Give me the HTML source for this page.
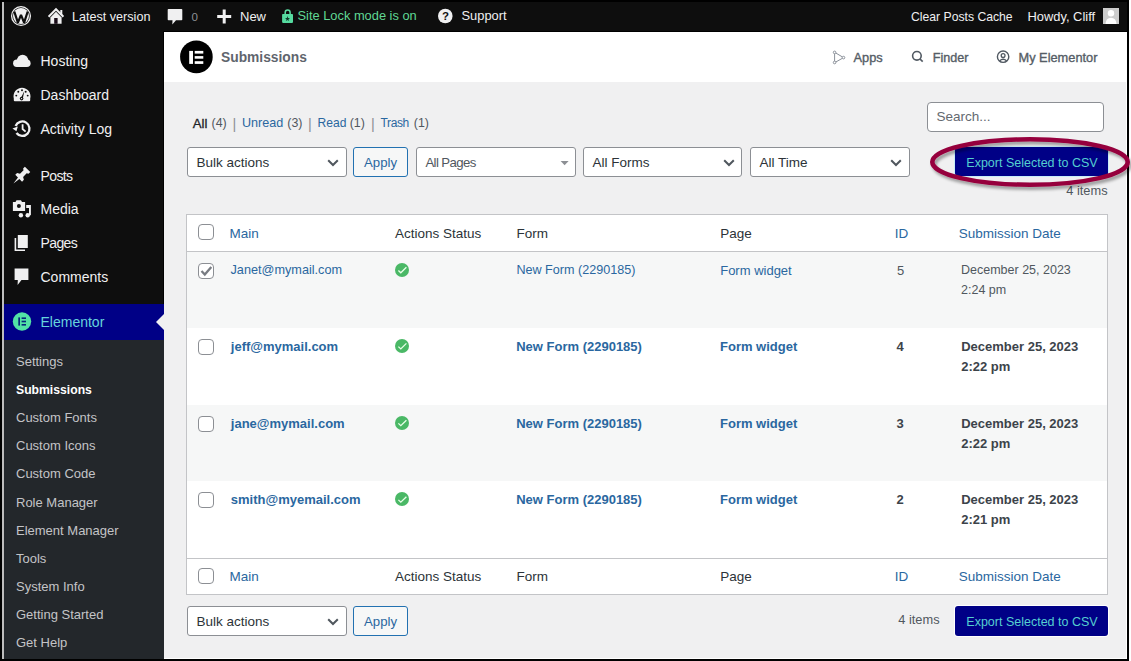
<!DOCTYPE html>
<html><head><meta charset="utf-8">
<style>
*{margin:0;padding:0;box-sizing:border-box}
html,body{width:1131px;height:661px;overflow:hidden;background:#000}
body{position:relative;font-family:"Liberation Sans",sans-serif;font-size:13px;color:#2c3338}
.a{position:absolute;white-space:nowrap}
.r{position:absolute}
svg{position:absolute;overflow:visible}
</style></head><body>
<div class="r" style="left:0px;top:0px;width:1129px;height:661px;background:#000;"></div>
<div class="r" style="left:1129px;top:0px;width:2px;height:661px;background:#fff;"></div>
<div class="r" style="left:2px;top:2px;width:2px;height:657px;background:#bdbdbd;"></div>
<div class="r" style="left:4px;top:2px;width:1123px;height:29px;background:#0e0e0e;"></div>
<div class="r" style="left:4px;top:31px;width:159px;height:628px;background:#0e0e0e;"></div>
<div class="r" style="left:163px;top:31px;width:964px;height:628px;background:#000;"></div>
<div class="r" style="left:164px;top:32px;width:963px;height:627px;background:#fff;"></div>
<div class="r" style="left:164px;top:32px;width:962px;height:626px;background:#f0f0f1;"></div>
<div class="r" style="left:4px;top:304px;width:160px;height:36px;background:#000086;"></div>
<div class="r" style="left:4px;top:340px;width:160px;height:319px;background:#23272b;"></div>
<div class="r" style="left:164px;top:32px;width:962px;height:50px;background:#fff;"></div>
<div class="a" style="left:72px;top:10.63px;font-size:12.6px;line-height:12.6px;color:#f0f0f1;">Latest version</div>
<div class="a" style="left:191.6px;top:10.58px;font-size:11.6px;line-height:11.6px;color:#8c8f94;">0</div>
<div class="a" style="left:240px;top:10.30px;font-size:13px;line-height:13px;color:#f0f0f1;">New</div>
<div class="a" style="left:297.5px;top:10.42px;font-size:12.85px;line-height:12.85px;color:#60d894;">Site Lock mode is on</div>
<div class="a" style="left:461.5px;top:10.38px;font-size:12.9px;line-height:12.9px;color:#f0f0f1;">Support</div>
<div class="a" style="left:911px;top:10.97px;font-size:12.2px;line-height:12.2px;color:#f0f0f1;">Clear Posts Cache</div>
<div class="a" style="left:1027.5px;top:10.98px;font-size:12.9px;line-height:12.9px;color:#f0f0f1;">Howdy, Cliff</div>
<div class="r" style="left:1103px;top:8px;width:16px;height:16px;background:#cdcdcd;"></div>
<div class="a" style="left:40.5px;top:54.35px;font-size:14px;line-height:14px;color:#f0f0f1;">Hosting</div>
<div class="a" style="left:40.5px;top:88.25px;font-size:14px;line-height:14px;color:#f0f0f1;">Dashboard</div>
<div class="a" style="left:40.5px;top:121.95px;font-size:14px;line-height:14px;color:#f0f0f1;">Activity Log</div>
<div class="a" style="left:40.5px;top:168.55px;font-size:14px;line-height:14px;color:#f0f0f1;letter-spacing:-0.6px;">Posts</div>
<div class="a" style="left:40.5px;top:202.15px;font-size:14px;line-height:14px;color:#f0f0f1;">Media</div>
<div class="a" style="left:40.5px;top:235.85px;font-size:14px;line-height:14px;color:#f0f0f1;letter-spacing:-0.6px;">Pages</div>
<div class="a" style="left:40.5px;top:269.95px;font-size:14px;line-height:14px;color:#f0f0f1;">Comments</div>
<div class="a" style="left:40.5px;top:315.15px;font-size:14px;line-height:14px;color:#66d4dc;">Elementor</div>
<div class="a" style="left:16px;top:355.10px;font-size:13px;line-height:13px;color:#c3c4c7;">Settings</div>
<div class="a" style="left:16px;top:383.85px;font-size:12.2px;line-height:12.2px;color:#ffffff;font-weight:bold;">Submissions</div>
<div class="a" style="left:16px;top:411.26px;font-size:13px;line-height:13px;color:#c3c4c7;">Custom Fonts</div>
<div class="a" style="left:16px;top:439.34px;font-size:13px;line-height:13px;color:#c3c4c7;">Custom Icons</div>
<div class="a" style="left:16px;top:467.42px;font-size:13px;line-height:13px;color:#c3c4c7;">Custom Code</div>
<div class="a" style="left:16px;top:495.50px;font-size:13px;line-height:13px;color:#c3c4c7;">Role Manager</div>
<div class="a" style="left:16px;top:523.58px;font-size:13px;line-height:13px;color:#c3c4c7;">Element Manager</div>
<div class="a" style="left:16px;top:551.66px;font-size:13px;line-height:13px;color:#c3c4c7;">Tools</div>
<div class="a" style="left:16px;top:579.74px;font-size:13px;line-height:13px;color:#c3c4c7;">System Info</div>
<div class="a" style="left:16px;top:607.82px;font-size:13px;line-height:13px;color:#c3c4c7;">Getting Started</div>
<div class="a" style="left:16px;top:635.90px;font-size:13px;line-height:13px;color:#c3c4c7;">Get Help</div>
<div class="a" style="left:221px;top:50.72px;font-size:13.8px;line-height:13.8px;color:#5f656d;font-weight:bold;">Submissions</div>
<div class="a" style="left:853.5px;top:51.66px;font-size:12.8px;line-height:12.8px;color:#555d66;-webkit-text-stroke:0.35px #555d66;">Apps</div>
<div class="a" style="left:932.7px;top:51.83px;font-size:12.6px;line-height:12.6px;color:#555d66;-webkit-text-stroke:0.35px #555d66;">Finder</div>
<div class="a" style="left:1018.5px;top:51.66px;font-size:12.8px;line-height:12.8px;color:#555d66;-webkit-text-stroke:0.35px #555d66;">My Elementor</div>
<div class="a" style="left:192.7px;top:116.53px;font-size:13.2px;line-height:13.2px;color:#1d2327;-webkit-text-stroke:0.3px #1d2327;">All</div>
<div class="a" style="left:211.5px;top:117.20px;font-size:12.4px;line-height:12.4px;color:#50575e;">(4)</div>
<div class="a" style="left:232.5px;top:116.63px;font-size:14.5px;line-height:14.5px;color:#8c8f94;">|</div>
<div class="a" style="left:242px;top:117.03px;font-size:12.6px;line-height:12.6px;color:#2a67a0;">Unread</div>
<div class="a" style="left:287.3px;top:117.20px;font-size:12.4px;line-height:12.4px;color:#50575e;">(3)</div>
<div class="a" style="left:308px;top:116.63px;font-size:14.5px;line-height:14.5px;color:#8c8f94;">|</div>
<div class="a" style="left:317.6px;top:117.46px;font-size:12.1px;line-height:12.1px;color:#2a67a0;">Read</div>
<div class="a" style="left:349.7px;top:117.20px;font-size:12.4px;line-height:12.4px;color:#50575e;">(1)</div>
<div class="a" style="left:371px;top:116.63px;font-size:14.5px;line-height:14.5px;color:#8c8f94;">|</div>
<div class="a" style="left:380.6px;top:117.14px;font-size:12.0px;line-height:12.0px;color:#2a67a0;letter-spacing:-0.4px;">Trash</div>
<div class="a" style="left:413.8px;top:117.20px;font-size:12.4px;line-height:12.4px;color:#50575e;">(1)</div>
<div class="r" style="left:187px;top:147px;width:160px;height:30px;background:#fff;border:1px solid #8c8f94;border-radius:3px;"></div>
<div class="a" style="left:196.5px;top:155.57px;font-size:13.5px;line-height:13.5px;color:#2c3338;">Bulk actions</div>
<div class="r" style="left:353px;top:147px;width:55px;height:30px;background:#f6f7f7;border:1px solid #2271b1;border-radius:3px;"></div>
<div class="a" style="left:364px;top:155.83px;font-size:13.2px;line-height:13.2px;color:#2a67a0;">Apply</div>
<div class="r" style="left:416px;top:147px;width:160px;height:30px;background:#fff;border:1px solid #8c8f94;border-radius:3px;"></div>
<div class="a" style="left:425.4px;top:155.83px;font-size:13.2px;line-height:13.2px;color:#50575e;letter-spacing:-0.6px;">All Pages</div>
<div class="r" style="left:583px;top:147px;width:159px;height:30px;background:#fff;border:1px solid #8c8f94;border-radius:3px;"></div>
<div class="a" style="left:592.5px;top:155.57px;font-size:13.5px;line-height:13.5px;color:#2c3338;">All Forms</div>
<div class="r" style="left:750px;top:147px;width:160px;height:30px;background:#fff;border:1px solid #8c8f94;border-radius:3px;"></div>
<div class="a" style="left:759.5px;top:155.57px;font-size:13.5px;line-height:13.5px;color:#2c3338;">All Time</div>
<div class="r" style="left:927px;top:102px;width:177px;height:30px;background:#fff;border:1px solid #8c8f94;border-radius:4px;"></div>
<div class="a" style="left:936.4px;top:110.27px;font-size:13.5px;line-height:13.5px;color:#646970;">Search...</div>
<div class="r" style="left:955px;top:147px;width:153px;height:29px;background:#000086;border-radius:3px;box-shadow:0 0 0 1px #c8eef8;"></div>
<div class="a" style="left:966.3px;top:156.62px;font-size:12.5px;line-height:12.5px;color:#55cfd0;">Export Selected to CSV</div>
<div class="a" style="left:1066.3px;top:184.66px;font-size:12.8px;line-height:12.8px;color:#50575e;">4 items</div>
<div class="r" style="left:187px;top:606px;width:160px;height:30px;background:#fff;border:1px solid #8c8f94;border-radius:3px;"></div>
<div class="a" style="left:196.5px;top:614.57px;font-size:13.5px;line-height:13.5px;color:#2c3338;">Bulk actions</div>
<div class="r" style="left:353px;top:606px;width:55px;height:30px;background:#f6f7f7;border:1px solid #2271b1;border-radius:3px;"></div>
<div class="a" style="left:364px;top:614.83px;font-size:13.2px;line-height:13.2px;color:#2a67a0;">Apply</div>
<div class="r" style="left:955px;top:606px;width:153px;height:30px;background:#000086;border-radius:3px;box-shadow:0 0 0 1px #ffffff;"></div>
<div class="a" style="left:966.3px;top:615.62px;font-size:12.5px;line-height:12.5px;color:#55cfd0;">Export Selected to CSV</div>
<div class="a" style="left:898.3px;top:613.96px;font-size:12.8px;line-height:12.8px;color:#50575e;">4 items</div>
<div class="r" style="left:186px;top:214px;width:922px;height:381px;background:#c3c4c7;"></div>
<div class="r" style="left:187px;top:215px;width:920px;height:36px;background:#fff;"></div>
<div class="r" style="left:187px;top:252px;width:920px;height:76px;background:#f6f7f7;"></div>
<div class="r" style="left:187px;top:328px;width:920px;height:77px;background:#fff;"></div>
<div class="r" style="left:187px;top:405px;width:920px;height:76px;background:#f6f7f7;"></div>
<div class="r" style="left:187px;top:481px;width:920px;height:77px;background:#fff;"></div>
<div class="r" style="left:187px;top:559px;width:920px;height:35px;background:#fff;"></div>
<div class="a" style="left:229.6px;top:226.57px;font-size:13.5px;line-height:13.5px;color:#2a67a0;">Main</div>
<div class="a" style="left:395px;top:226.57px;font-size:13.5px;line-height:13.5px;color:#2c3338;">Actions Status</div>
<div class="a" style="left:516.4px;top:226.57px;font-size:13.5px;line-height:13.5px;color:#2c3338;">Form</div>
<div class="a" style="left:720.2px;top:226.57px;font-size:13.5px;line-height:13.5px;color:#2c3338;">Page</div>
<div class="a" style="left:894.8px;top:226.57px;font-size:13.5px;line-height:13.5px;color:#2a67a0;">ID</div>
<div class="a" style="left:958.8px;top:226.57px;font-size:13.5px;line-height:13.5px;color:#2a67a0;">Submission Date</div>
<div class="a" style="left:229.6px;top:570.07px;font-size:13.5px;line-height:13.5px;color:#2a67a0;">Main</div>
<div class="a" style="left:395px;top:570.07px;font-size:13.5px;line-height:13.5px;color:#2c3338;">Actions Status</div>
<div class="a" style="left:516.4px;top:570.07px;font-size:13.5px;line-height:13.5px;color:#2c3338;">Form</div>
<div class="a" style="left:720.2px;top:570.07px;font-size:13.5px;line-height:13.5px;color:#2c3338;">Page</div>
<div class="a" style="left:894.8px;top:570.07px;font-size:13.5px;line-height:13.5px;color:#2a67a0;">ID</div>
<div class="a" style="left:958.8px;top:570.07px;font-size:13.5px;line-height:13.5px;color:#2a67a0;">Submission Date</div>
<div class="r" style="left:198px;top:224px;width:16px;height:16px;background:#fff;border:1px solid #8c8f94;border-radius:4px;"></div>
<div class="r" style="left:198px;top:568px;width:16px;height:16px;background:#fff;border:1px solid #8c8f94;border-radius:4px;"></div>
<div class="r" style="left:198px;top:263px;width:16px;height:16px;background:#fff;border:1px solid #8c8f94;border-radius:4px;"></div>
<div class="a" style="left:230.5px;top:264.25px;font-size:12.7px;line-height:12.7px;color:#2a67a0;">Janet@mymail.com</div>
<div class="a" style="left:516.4px;top:264.33px;font-size:12.6px;line-height:12.6px;color:#2a67a0;">New Form (2290185)</div>
<div class="a" style="left:720.2px;top:264.00px;font-size:13px;line-height:13px;color:#2a67a0;">Form widget</div>
<div class="a" style="left:897px;top:264.00px;font-size:13px;line-height:13px;color:#50575e;">5</div>
<div class="a" style="left:961px;top:264.42px;font-size:12.5px;line-height:12.5px;color:#50575e;">December 25, 2023</div>
<div class="a" style="left:961px;top:283.92px;font-size:12.5px;line-height:12.5px;color:#50575e;">2:24 pm</div>
<div class="r" style="left:395px;top:263px;width:14px;height:14px;background:#4ab866;border-radius:50%;"></div>
<div class="r" style="left:198px;top:339px;width:16px;height:16px;background:#fff;border:1px solid #8c8f94;border-radius:4px;"></div>
<div class="a" style="left:230.8px;top:340.00px;font-size:13px;line-height:13px;color:#2a67a0;font-weight:bold;">jeff@mymail.com</div>
<div class="a" style="left:516.2px;top:340.00px;font-size:13px;line-height:13px;color:#2a67a0;font-weight:bold;">New Form (2290185)</div>
<div class="a" style="left:720px;top:340.00px;font-size:13px;line-height:13px;color:#2a67a0;font-weight:bold;">Form widget</div>
<div class="a" style="left:896.4px;top:340.00px;font-size:13px;line-height:13px;color:#3c434a;font-weight:bold;">4</div>
<div class="a" style="left:961.2px;top:340.00px;font-size:13px;line-height:13px;color:#3c434a;font-weight:bold;">December 25, 2023</div>
<div class="a" style="left:961.2px;top:359.50px;font-size:13px;line-height:13px;color:#3c434a;font-weight:bold;">2:22 pm</div>
<div class="r" style="left:395px;top:339px;width:14px;height:14px;background:#4ab866;border-radius:50%;"></div>
<div class="r" style="left:198px;top:416px;width:16px;height:16px;background:#fff;border:1px solid #8c8f94;border-radius:4px;"></div>
<div class="a" style="left:230.8px;top:417.00px;font-size:13px;line-height:13px;color:#2a67a0;font-weight:bold;">jane@mymail.com</div>
<div class="a" style="left:516.2px;top:417.00px;font-size:13px;line-height:13px;color:#2a67a0;font-weight:bold;">New Form (2290185)</div>
<div class="a" style="left:720px;top:417.00px;font-size:13px;line-height:13px;color:#2a67a0;font-weight:bold;">Form widget</div>
<div class="a" style="left:896.4px;top:417.00px;font-size:13px;line-height:13px;color:#3c434a;font-weight:bold;">3</div>
<div class="a" style="left:961.2px;top:417.00px;font-size:13px;line-height:13px;color:#3c434a;font-weight:bold;">December 25, 2023</div>
<div class="a" style="left:961.2px;top:436.50px;font-size:13px;line-height:13px;color:#3c434a;font-weight:bold;">2:22 pm</div>
<div class="r" style="left:395px;top:416px;width:14px;height:14px;background:#4ab866;border-radius:50%;"></div>
<div class="r" style="left:198px;top:492px;width:16px;height:16px;background:#fff;border:1px solid #8c8f94;border-radius:4px;"></div>
<div class="a" style="left:230.8px;top:493.00px;font-size:13px;line-height:13px;color:#2a67a0;font-weight:bold;">smith@myemail.com</div>
<div class="a" style="left:516.2px;top:493.00px;font-size:13px;line-height:13px;color:#2a67a0;font-weight:bold;">New Form (2290185)</div>
<div class="a" style="left:720px;top:493.00px;font-size:13px;line-height:13px;color:#2a67a0;font-weight:bold;">Form widget</div>
<div class="a" style="left:896.4px;top:493.00px;font-size:13px;line-height:13px;color:#3c434a;font-weight:bold;">2</div>
<div class="a" style="left:961.2px;top:493.00px;font-size:13px;line-height:13px;color:#3c434a;font-weight:bold;">December 25, 2023</div>
<div class="a" style="left:961.2px;top:512.50px;font-size:13px;line-height:13px;color:#3c434a;font-weight:bold;">2:21 pm</div>
<div class="r" style="left:395px;top:492px;width:14px;height:14px;background:#4ab866;border-radius:50%;"></div>
<svg width="1131" height="661" style="left:0;top:0" viewBox="0 0 1131 661"><circle cx="21" cy="16" r="9.4" fill="none" stroke="#f0f0f1" stroke-width="1.3"/><circle cx="21" cy="16" r="8" fill="#f0f0f1"/><path d="M14.3,11.6 L17.9,22.6 L21,14.8 L24.1,22.6 L27.7,11.6" fill="none" stroke="#0e0e0e" stroke-width="2.2" stroke-linejoin="bevel"/><path d="M48.6,16.8 L56,9.2 L63.4,16.8" fill="none" stroke="#f0f0f1" stroke-width="2"/><rect x="60.3" y="10" width="2" height="5" fill="#f0f0f1"/><path d="M50.4,17.4 L56,11.8 L61.6,17.4 V23.8 H50.4 Z" fill="#f0f0f1"/><rect x="54.2" y="18" width="3.4" height="5.8" fill="#1a0c18"/><path d="M168.5,9 H181.5 Q182.3,9 182.3,9.8 V19.5 Q182.3,20.3 181.5,20.3 H176 L172.3,24.4 L172.5,20.3 H168.5 Q167.7,20.3 167.7,19.5 V9.8 Q167.7,9 168.5,9 Z" fill="#f0f0f1"/><rect x="222.7" y="9.5" width="3" height="14" fill="#f0f0f1"/><rect x="217.2" y="15" width="14" height="3" fill="#f0f0f1"/><path d="M285.2,14 V12.5 A2.45,2.45 0 0 1 290.1,12.5 V14" fill="none" stroke="#5ddca2" stroke-width="1.5"/><rect x="282.1" y="14" width="10.9" height="8.9" rx="0.8" fill="#56dba0"/><path d="M287.5,16 L288.1,18 L290,18 L288.5,19.2 L289.1,21 L287.5,19.9 L285.9,21 L286.5,19.2 L285,18 L286.9,18 Z" fill="#0f3a2a"/><circle cx="445.3" cy="16" r="7.3" fill="#f0f0f1"/><text x="445.6" y="20.3" font-family="Liberation Sans" font-weight="bold" font-size="11.5" fill="#101010" text-anchor="middle">?</text><circle cx="1111" cy="13.2" r="3.2" fill="#fff"/><path d="M1105.5,24 Q1106,17.8 1111,17.8 Q1116,17.8 1116.5,24 Z" fill="#fff"/><g fill="#f0f0f1"><circle cx="16.8" cy="63.3" r="3.7"/><circle cx="22.6" cy="60.6" r="5.8"/><circle cx="26.8" cy="63.2" r="3.8"/><rect x="16.8" y="62" width="10" height="5"/></g><path d="M13.8,98.5 A8.5,8.5 0 1 1 30.2,98.5 V100.2 Q30.2,101.2 29.2,101.2 H14.8 Q13.8,101.2 13.8,100.2 Z" fill="#f0f0f1"/><g fill="#0e0e0e"><circle cx="16.3" cy="95.6" r="0.95"/><circle cx="18.3" cy="91.8" r="0.95"/><circle cx="22" cy="90.3" r="0.95"/><circle cx="25.7" cy="91.8" r="0.95"/><circle cx="27.7" cy="95.6" r="0.95"/></g><path d="M20.6,98.4 L24.4,91 L22.6,99.2 Z" fill="#0e0e0e"/><circle cx="21.6" cy="98.6" r="1.8" fill="#0e0e0e"/><circle cx="21.6" cy="98.6" r="0.7" fill="#f0f0f1"/><path d="M15.6,126 A7.2,7.2 0 1 1 16.5,133" fill="none" stroke="#f0f0f1" stroke-width="2.3"/><path d="M12.8,127.5 L18.5,127.5 L15.6,131.5 Z" fill="#f0f0f1" transform="rotate(-20 15.6 129)"/><path d="M22.6,124.2 V129 L25.6,131.6" fill="none" stroke="#f0f0f1" stroke-width="1.8"/><path d="M-3.8,-10 L3.8,-10 L3.8,-7.5 L2.2,-6.5 L2.2,-1.5 L4.8,0 L4.8,2.6 L1,2.6 L0,10 L-1,2.6 L-4.8,2.6 L-4.8,0 L-2.2,-1.5 L-2.2,-6.5 L-3.8,-7.5 Z" fill="#f0f0f1" transform="translate(20.5 176.4) rotate(45)"/><path d="M12.9,202 H15.5 L16.5,200.2 H21 L22,202 H25.1 V210.9 H12.9 Z" fill="#f0f0f1"/><circle cx="18.9" cy="206" r="2" fill="#101010"/><path d="M26.2,204.9 H30.9 V215.3 H29 V208 H26.2 Z" fill="#f0f0f1"/><circle cx="20.9" cy="215.3" r="2.2" fill="#f0f0f1"/><circle cx="27.7" cy="215.3" r="2.2" fill="#f0f0f1"/><rect x="17.8" y="235" width="10" height="13" fill="#f0f0f1"/><path d="M14.6,238 H16.2 V249.4 H25 V251 H14.6 Z" fill="#f0f0f1"/><path d="M14.6,268.6 H28.4 V280 H21.5 L17.6,285 L17.8,280 H14.6 Z" fill="#f0f0f1"/><circle cx="22" cy="321.5" r="9.2" fill="#52e3a6"/><g fill="#06297a"><rect x="18.3" y="317.4" width="1.7" height="8.2"/><rect x="21.6" y="317.4" width="4.4" height="1.6"/><rect x="21.6" y="320.7" width="4.4" height="1.6"/><rect x="21.6" y="324" width="4.4" height="1.6"/></g><path d="M164,314 L156,322 L164,330 Z" fill="#f0f0f1"/><circle cx="196.4" cy="56.9" r="16.3" fill="#000"/><g fill="#fff"><rect x="189.2" y="50.9" width="3.8" height="13"/><rect x="194.7" y="50.9" width="8.6" height="2.7"/><rect x="194.7" y="56.1" width="8.6" height="2.6"/><rect x="194.7" y="61.2" width="8.6" height="2.7"/></g><g fill="none" stroke="#8a9099" stroke-width="1"><path d="M834.6,53.8 V61 M835.8,53 L842.2,56.8 M842.2,58.4 L835.8,62"/><circle cx="834.6" cy="52.4" r="1.3"/><circle cx="843.5" cy="57.6" r="1.3"/><circle cx="834.6" cy="62.5" r="1.3"/></g><circle cx="916.9" cy="55.8" r="4.3" fill="none" stroke="#515962" stroke-width="1.6"/><path d="M920,59 L922.7,61.6" stroke="#515962" stroke-width="1.7"/><circle cx="1003.1" cy="56.7" r="5.7" fill="none" stroke="#515962" stroke-width="1.4"/><circle cx="1003.1" cy="55.6" r="1.9" fill="none" stroke="#515962" stroke-width="1.3"/><path d="M999.5,61 Q1003.1,57.6 1006.7,61" fill="none" stroke="#515962" stroke-width="1.3"/><path d="M328.2,160.2 L333,165.0 L337.8,160.2" fill="none" stroke="#50575e" stroke-width="2"/><path d="M724.2,160.2 L729,165.0 L733.8,160.2" fill="none" stroke="#50575e" stroke-width="2"/><path d="M891.2,160.2 L896,165.0 L900.8,160.2" fill="none" stroke="#50575e" stroke-width="2"/><path d="M328.2,619.2 L333,624.0 L337.8,619.2" fill="none" stroke="#50575e" stroke-width="2"/><path d="M560.6,161 H568.6 L564.6,165.3 Z" fill="#8c8f94"/><path d="M201.5,271 L204.8,274.5 L211.3,267" fill="none" stroke="#787c82" stroke-width="2.3"/><path d="M398.4,270.5 L400.8,272.8 L406.4,267.3" fill="none" stroke="#e8ffe8" stroke-width="1.3"/><path d="M398.4,346.59999999999997 L400.8,348.9 L406.4,343.4" fill="none" stroke="#e8ffe8" stroke-width="1.3"/><path d="M398.4,423.4 L400.8,425.7 L406.4,420.2" fill="none" stroke="#e8ffe8" stroke-width="1.3"/><path d="M398.4,499.9 L400.8,502.2 L406.4,496.7" fill="none" stroke="#e8ffe8" stroke-width="1.3"/><defs><filter id="sh" x="-20%" y="-50%" width="140%" height="200%"><feGaussianBlur in="SourceAlpha" stdDeviation="1.5"/><feOffset dx="1.5" dy="2.5"/><feComponentTransfer><feFuncA type="linear" slope="0.35"/></feComponentTransfer><feMerge><feMergeNode/><feMergeNode in="SourceGraphic"/></feMerge></filter></defs><ellipse cx="1030" cy="162" rx="97.7" ry="22.8" fill="none" stroke="#96003e" stroke-width="4.6" filter="url(#sh)"/></svg>

</body></html>
